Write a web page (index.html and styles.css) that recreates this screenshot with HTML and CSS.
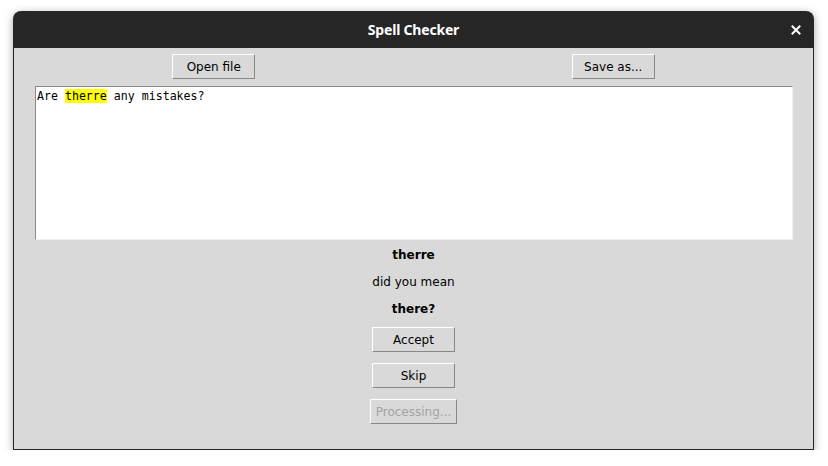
FILE: index.html
```html
<!DOCTYPE html>
<html>
<head>
<meta charset="utf-8">
<title>Spell Checker</title>
<link rel="stylesheet" href="styles.css">
</head>
<body>
<div class="window">
  <div class="titlebar">
    <span class="title">Spell Checker</span>
    <span class="close"><svg width="10" height="10" viewBox="0 0 10 10"><path d="M1.5 1.5 L8.5 8.5 M8.5 1.5 L1.5 8.5" stroke="#fff" stroke-width="2" stroke-linecap="square"/></svg></span>
  </div>
  <div class="client">
    <div class="toolbar">
      <div class="cell"><button class="btn">Open file</button></div>
      <div class="cell"><button class="btn">Save as...</button></div>
    </div>
    <div class="textarea">Are <span class="hl">therre</span> any mistakes?</div>
    <div class="labels">
      <div class="label bold">therre</div>
      <div class="label">did you mean</div>
      <div class="label bold">there?</div>
    </div>
    <div class="actions">
      <button class="btn">Accept</button>
      <button class="btn">Skip</button>
      <button class="btn disabled">Processing...</button>
    </div>
  </div>
</div>
</body>
</html>
```
FILE: styles.css
```css
html, body {
  margin: 0;
  padding: 0;
  background: #ffffff;
}
body {
  padding: 11px 0 0 13px;
}
.window {
  width: 801px;
  box-shadow: 0 2px 8px rgba(0,0,0,0.35);
  border-radius: 8px 8px 0 0;
}
.titlebar {
  position: relative;
  height: 37px;
  background: #262626;
  border-radius: 8px 8px 0 0;
  display: flex;
  align-items: center;
  justify-content: center;
}
.title {
  color: #ffffff;
  font-family: "Noto Sans", "DejaVu Sans", sans-serif;
  font-weight: bold;
  font-size: 14px;
  letter-spacing: -0.2px;
}
.close {
  position: absolute;
  right: 13px;
  top: 14px;
  width: 10px;
  height: 10px;
  display: flex;
}
.client {
  box-sizing: border-box;
  height: 402px;
  background: #d9d9d9;
  border: 1px solid #262626;
  border-top: none;
  display: flex;
  flex-direction: column;
  font-family: "DejaVu Sans", sans-serif;
  font-size: 12px;
  color: #000;
}
.toolbar {
  display: grid;
  grid-template-columns: 1fr 1fr;
  padding-top: 6px;
}
.cell {
  display: flex;
  justify-content: center;
}
.btn {
  box-sizing: border-box;
  height: 25px;
  min-width: 83px;
  padding: 0 8px;
  background: #d9d9d9;
  border: 1px solid;
  border-color: #ffffff #888888 #888888 #ffffff;
  font-family: "DejaVu Sans", sans-serif;
  font-size: 12px;
  color: #000;
  margin: 0;
}
.btn.disabled {
  color: #a3a3a3;
  padding: 0 5px;
}
.textarea {
  box-sizing: border-box;
  margin: 7px 20px 0 21px;
  height: 154px;
  background: #ffffff;
  border: 1px solid;
  border-color: #8a8a8a #f0f0f0 #f0f0f0 #8a8a8a;
  padding: 2px 1px;
  font-family: "DejaVu Sans Mono", monospace;
  font-size: 11.6px;
  line-height: 15px;
  white-space: pre;
}
.hl {
  background: #ffff00;
}
.labels {
  padding-top: 2px;
}
.label {
  height: 27px;
  line-height: 27px;
  text-align: center;
}
.bold {
  font-weight: bold;
}
.actions {
  display: flex;
  flex-direction: column;
  align-items: center;
  gap: 11px;
  padding-top: 4px;
}
```
